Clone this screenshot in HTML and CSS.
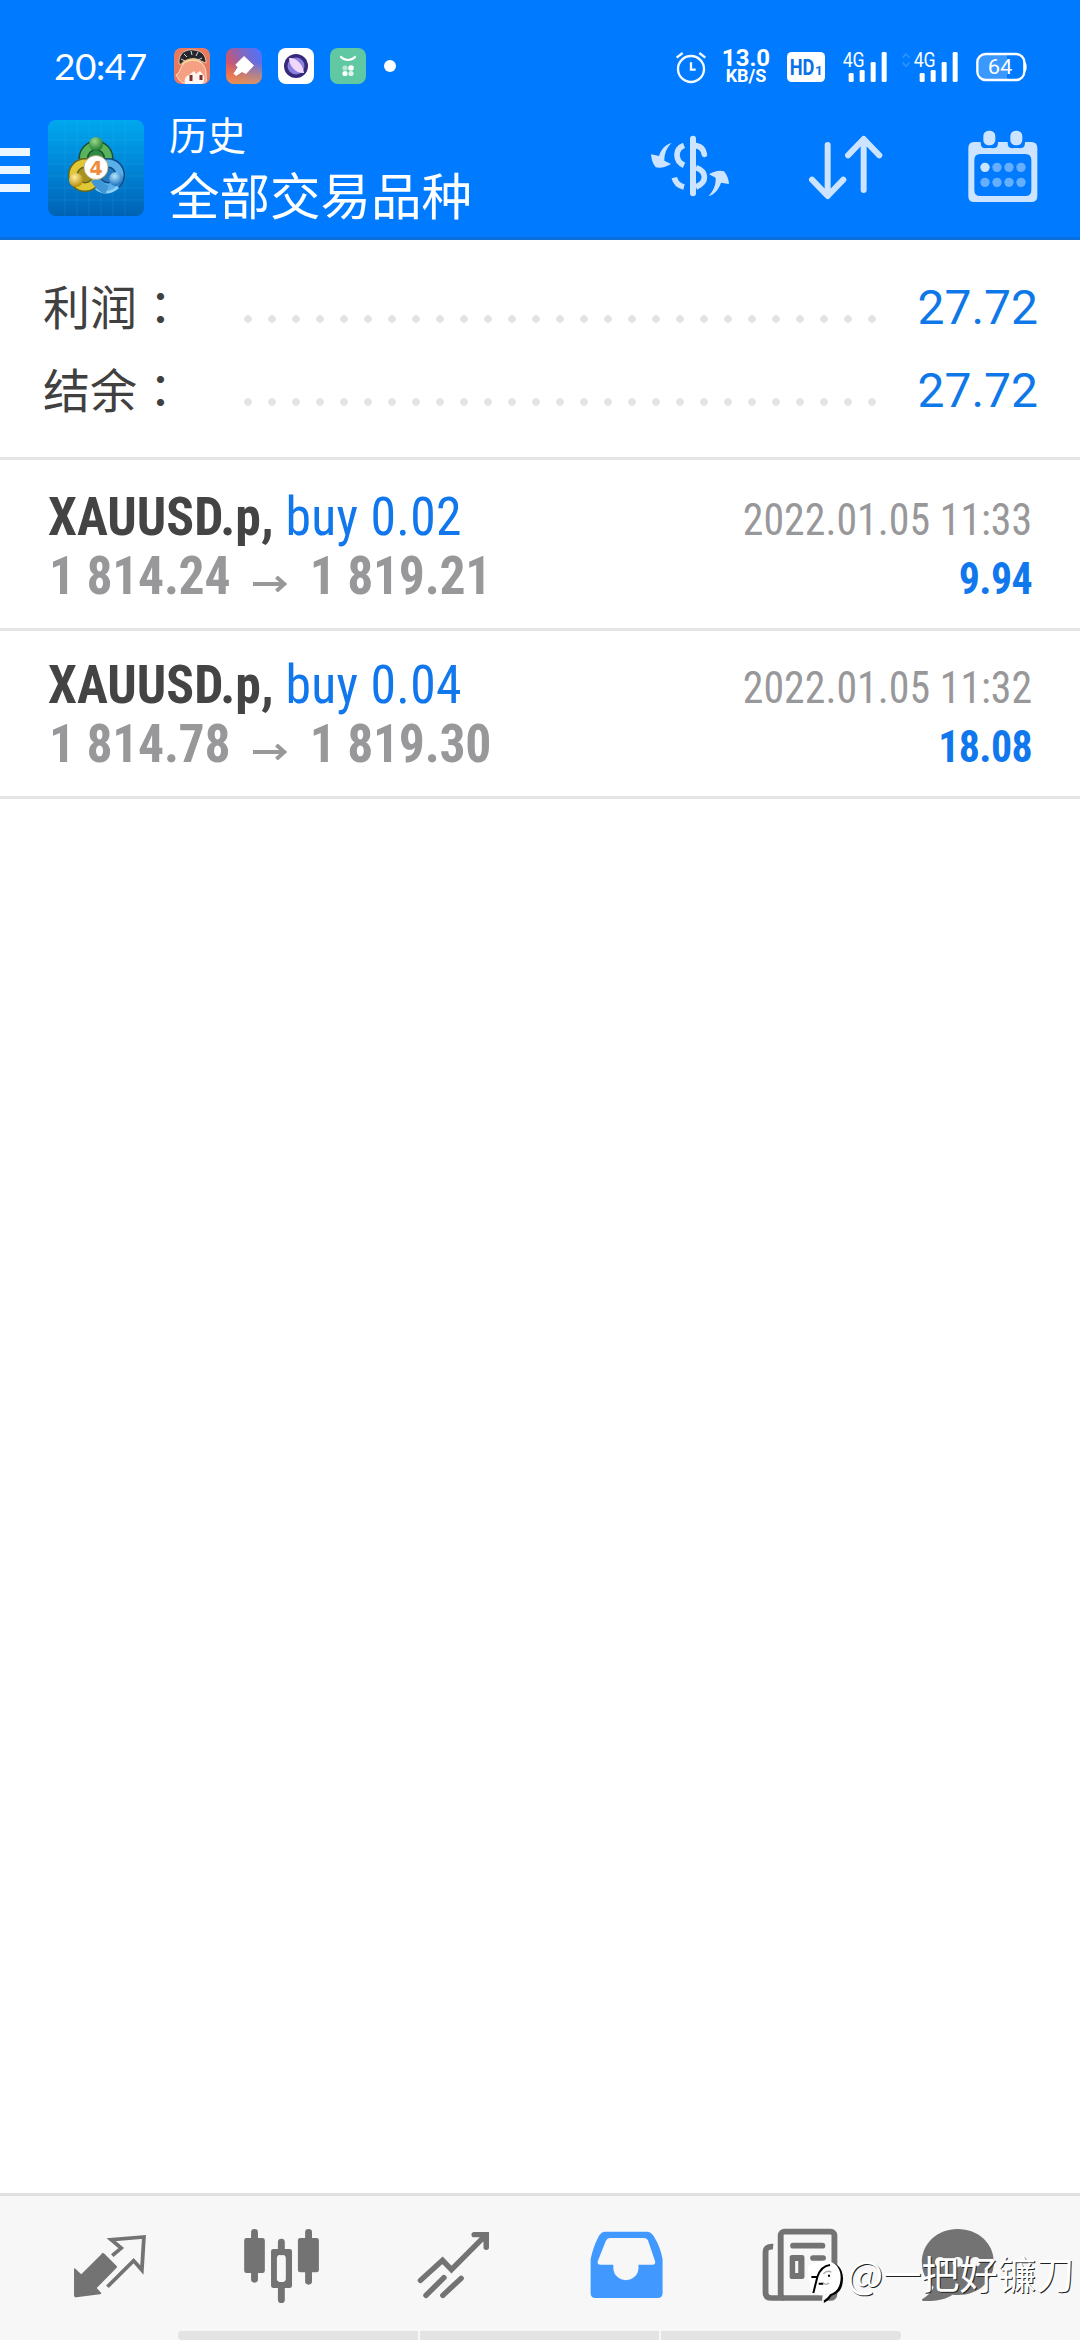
FILE: index.html
```html
<!DOCTYPE html>
<html lang="zh-CN">
<head>
<meta charset="utf-8">
<title>历史</title>
<link rel="stylesheet" href="styles.css">
</head>
<body>
<header class="top">
  <div class="status">
    <span class="clock">20:47</span>
    <div class="apps">
      <svg class="app" viewBox="0 0 36 36"><rect width="36" height="36" rx="7" fill="#e97a5e"/><path d="M5 16C4 4 13 1 20 2c8 1 12 5 12 13l-5-2c-6-4-13-3-18 3z" fill="#26262e" stroke="#f3d9c8" stroke-width=".8"/><path d="M10 6l3 3m4-6l1 4m6-3l-2 4m6 2l-4 2M7 11l4 2" stroke="#ddd" stroke-width="1"/><path d="M8 16c5-6 15-6 20 0" stroke="#ecc568" stroke-width="2" fill="none"/><path d="M2 27C8 24 5 16 14 13c12-3 18 4 18 13 0 6 2 7-2 9H9c-4-2-5-5-7-8z" fill="#f6a083" stroke="#fff0e0" stroke-width=".8"/><path d="M11 36c-1-6 1-8 4-9l5-4 2 3 4-3 4 5c1 4 0 6-2 8z" fill="#fff5ef"/><path d="M17 27v6M27 27v5" stroke="#7c3030" stroke-width="3"/></svg>
      <svg class="app" viewBox="0 0 36 36"><defs><linearGradient id="pin" x1="0" y1="0.6" x2="1" y2="0.1"><stop offset="0" stop-color="#e9504e"/><stop offset=".5" stop-color="#8466bd"/><stop offset="1" stop-color="#4b74ff"/></linearGradient><linearGradient id="pin2" x1="0" y1="0" x2="0" y2="1"><stop offset=".4" stop-color="#f2a044" stop-opacity="0"/><stop offset="1" stop-color="#e79a58" stop-opacity=".85"/></linearGradient></defs><rect width="36" height="36" rx="8" fill="url(#pin)"/><rect width="36" height="36" rx="8" fill="url(#pin2)"/><path d="M18 8.500l9.500 9-7.500 8-4-2-6 4-2-2 4-6-2-3z" fill="#fff" stroke="#fff" stroke-linejoin="round"/></svg>
      <svg class="app" viewBox="0 0 36 36"><rect width="36" height="36" rx="8" fill="#fff"/><circle cx="18" cy="18" r="12" fill="#38287c"/><circle cx="18" cy="18" r="8.500" fill="#8a80e0"/><path d="M11 10c7-1 14 6 15 15-8 1-15-7-15-15z" fill="#f1d8fa"/></svg>
      <svg class="app" viewBox="0 0 36 36"><rect width="36" height="36" rx="8" fill="#60c9a4"/><path d="M11 9c4 4 10 4 14 0" stroke="#fff" stroke-width="2.200" stroke-linecap="round" fill="none"/><g fill="#fff"><circle cx="15" cy="20" r="2.600" opacity=".55"/><circle cx="21" cy="20" r="2.800"/><circle cx="15" cy="25.500" r="2.600"/><circle cx="21" cy="25.500" r="2.600" opacity=".8"/></g></svg>
    </div>
    <span class="more-dot"></span>
    <div class="indicators">
      <svg width="36" height="40" viewBox="96 45 108 120" fill="none" stroke="#f4faff" stroke-width="7"><circle cx="150" cy="114" r="39"/><path d="M150 94v22h14M107 80l18-14M193 80l-18-14"/></svg>
      <div class="speed"><b>13.0</b><b>KB/S</b></div>
      <svg width="38" height="40" viewBox="438 45 114 120"><rect x="438" y="63" width="114" height="90" rx="14" fill="#fff"/><text class="hd" x="446" y="131" textLength="74" lengthAdjust="spacingAndGlyphs" font-size="65">HD</text><text class="hd" x="522" y="131" font-size="40">1</text></svg>
      <svg class="sig" width="46" height="40" viewBox="604 45 138 120" fill="#fff"><text class="net" x="606" y="107" textLength="66" lengthAdjust="spacingAndGlyphs">4G</text><rect x="624" y="126" width="15" height="27" rx="4"/><rect x="657" y="117" width="15" height="36" rx="4"/><rect x="690" y="93" width="15" height="60" rx="4"/><rect x="723" y="63" width="15" height="90" rx="4"/></svg>
      <svg class="sig2" width="58" height="40" viewBox="781 45 174 120" fill="#fff"><path d="M786 80l10-11 10 11M786 95l10 11 10-11" fill="none" stroke="#2f93ff" stroke-width="5"/><text class="net" x="819" y="107" textLength="66" lengthAdjust="spacingAndGlyphs">4G</text><rect x="837" y="126" width="15" height="27" rx="4"/><rect x="870" y="117" width="15" height="36" rx="4"/><rect x="903" y="93" width="15" height="60" rx="4"/><rect x="936" y="63" width="15" height="90" rx="4"/></svg>
      <svg class="bat" width="51" height="40" viewBox="1007 45 153 120"><rect x="1011" y="69" width="141" height="78" rx="25" fill="#3b98ff"/><path d="M1100 69h27q25 0 25 25v28q0 25-25 25h-27z" fill="#007aff"/><rect x="1011" y="69" width="141" height="78" rx="25" fill="none" stroke="#fff" stroke-width="7"/><path d="M1154 92q5 4 5 16t-5 16z" fill="#fff"/><text x="1042" y="130" class="pct" textLength="74" lengthAdjust="spacingAndGlyphs">64</text></svg>
    </div>
  </div>
  <div class="bar">
    <div class="menu"><i></i><i></i><i></i></div>
    <svg class="logo" viewBox="0 0 96 96">
      <defs><linearGradient id="sky" x1="0" y1="0" x2="0" y2="1"><stop offset="0" stop-color="#00a8ee"/><stop offset=".5" stop-color="#0085d6"/><stop offset="1" stop-color="#0062b4"/></linearGradient>
      <radialGradient id="gr" cx=".4" cy=".3" r=".7"><stop offset="0" stop-color="#9ad989"/><stop offset="1" stop-color="#1d7a30"/></radialGradient>
      <radialGradient id="ye" cx=".4" cy=".3" r=".7"><stop offset="0" stop-color="#fff0a0"/><stop offset="1" stop-color="#b98d0c"/></radialGradient>
      <radialGradient id="bl" cx=".4" cy=".3" r=".7"><stop offset="0" stop-color="#b6e5ff"/><stop offset="1" stop-color="#1971bd"/></radialGradient></defs>
      <rect width="96" height="96" rx="8" fill="url(#sky)"/>
      <path d="M17 0v96M29 0v96M41 0v96M53 0v96M65 0v96M77 0v96M0 20h96M0 32h96M0 44h96M0 56h96M0 68h96M0 80h96" stroke="#4cc5ff" stroke-opacity=".14"/>
      <circle cx="48" cy="38" r="12.500" fill="#2f8a43" stroke="#174f35" stroke-width="10"/><circle cx="48" cy="38" r="12.500" fill="none" stroke="#58b35b" stroke-width="7"/>
      <circle cx="60" cy="55" r="12" fill="#2478bd" stroke="#0d4784" stroke-width="10"/><circle cx="60" cy="55" r="12" fill="none" stroke="#59afe8" stroke-width="7"/>
      <circle cx="37" cy="55" r="12" fill="#a89120" stroke="#65651b" stroke-width="10"/><circle cx="37" cy="55" r="12" fill="none" stroke="#dfc735" stroke-width="7"/>
      <path d="M48 68c6 6 16 5 22-1" stroke="#8fd0f5" stroke-width="3" fill="none"/><path d="M47 59q4 8 12 11" stroke="#3f97d6" stroke-width="9" fill="none"/>
      <circle cx="48" cy="24" r="7" fill="url(#gr)"/><circle cx="28" cy="60" r="7" fill="url(#ye)"/><circle cx="68" cy="59" r="7" fill="url(#bl)"/>
      <circle cx="48" cy="47.500" r="12" fill="#fff" stroke="#b9a778" stroke-width=".8"/><text x="48" y="55" class="four">4</text>
    </svg>
    <div class="titles"><span class="sub">历史</span><span class="title">全部交易品种</span></div>
    <div class="actions">
      <svg width="80" height="76" viewBox="30 297 240 228"><g fill="none" stroke="#cce4ff" stroke-width="17"><path d="M159 326v164" stroke-linecap="round" stroke-width="18"/><path d="M168 347c14 2 23 11 25 26" stroke-linecap="round"/><path d="M132 346c-28 11-28 47 0 60M168 413c32 11 35 44 0 58M103 443c3 14 13 24 29 28"/></g><path d="M95 339c-19 4-31 19-38 39l-24-5c1 15 5 27 14 39 15 4 31-1 46-10l-20-10c0-21 7-39 22-53zM205 498c19-4 31-20 38-40l24 4c-1-16-6-27-15-38-15-4-29 0-45 9l20 10c1 20-6 40-22 55z" fill="#cce4ff"/></svg>
      <svg class="sort" width="76" height="76" viewBox="505 297 228 228" fill="none" stroke="#cce4ff" stroke-width="18" stroke-linecap="round" stroke-linejoin="round"><path d="M564 345v152M517 449l47 49 47-49M672 480V328M625 376l47-49 47 49"/></svg>
      <svg width="70" height="76" viewBox="983 297 210 228" fill="#cce4ff"><path fill-rule="evenodd" d="M1001 336h20c0 23 12 18 26 18s26 5 26-18h29c0 23 12 18 26 18s26 5 26-18h19q18 0 18 18v144q0 18-18 18H1001q-17 0-17-18V354q0-18 17-18zm19 36q-18 0-18 18v90q0 18 18 18h135q18 0 18-18v-90q0-18-18-18z"/><rect x="1029" y="302" width="36" height="44" rx="16"/><rect x="1110" y="302" width="36" height="44" rx="16"/><circle cx="1034" cy="412" r="14"/><g fill="#66afff"><circle cx="1070" cy="412" r="14"/><circle cx="1106" cy="412" r="14"/><circle cx="1142" cy="412" r="14"/><circle cx="1034" cy="457" r="14"/><circle cx="1070" cy="457" r="14"/><circle cx="1106" cy="457" r="14"/><circle cx="1142" cy="457" r="14"/></g></svg>
    </div>
  </div>
</header>
<main>
  <section class="summary">
    <div class="line"><span class="label">利润<span class="colon" lang="zh-TW">：</span></span><span class="dots"></span><span class="amount">27.72</span></div>
    <div class="line"><span class="label">结余<span class="colon" lang="zh-TW">：</span></span><span class="dots"></span><span class="amount">27.72</span></div>
  </section>
  <section class="deals">
    <article class="deal">
      <div class="left"><div class="sym"><b>XAUUSD.p,</b> <span>buy 0.02</span></div><div class="price"><b>1 814.24</b><svg class="arrow" viewBox="0 0 35 16" preserveAspectRatio="none"><path d="M0 8h32M24 1l8 7-8 7"/></svg><b>1 819.21</b></div></div>
      <div class="right"><div class="date">2022.01.05 11:33</div><div class="gain">9.94</div></div>
    </article>
    <article class="deal">
      <div class="left"><div class="sym"><b>XAUUSD.p,</b> <span>buy 0.04</span></div><div class="price"><b>1 814.78</b><svg class="arrow" viewBox="0 0 35 16" preserveAspectRatio="none"><path d="M0 8h32M24 1l8 7-8 7"/></svg><b>1 819.30</b></div></div>
      <div class="right"><div class="date">2022.01.05 11:32</div><div class="gain">18.08</div></div>
    </article>
  </section>
</main>
<nav class="tabs">
  <svg preserveAspectRatio="none" viewBox="69.7 48 499.500 432"><path d="M296 220q4-2 8 2l34 35q4 3 0 7l-57 60 13 15q1 3-4 4l-68 9q-7 1-7-6v-78q0-5 4-2l17 17 57-59z" fill="#737373"/><path d="M326 227l26-23-29-25 95-8-6 99-24-28-76 78" fill="none" stroke="#737373" stroke-width="11"/></svg>
  <svg preserveAspectRatio="none" viewBox="569.1 48 499.500 432" fill="#737373"><g stroke="#737373" stroke-width="20" stroke-linecap="round"><path d="M739 157v141M896 157v147M817 186v30M817 320v39"/></g><rect x="709" y="174" width="60" height="105" rx="7"/><rect x="865" y="174" width="61" height="103" rx="7"/><path fill-rule="evenodd" d="M794 207h47q7 0 7 7v103q0 7-7 7h-47q-7 0-7-7V214q0-7 7-7zm23 17q-13 0-13 10v62q0 10 13 10t13-10v-62q0-10-13-10z"/></svg>
  <svg preserveAspectRatio="none" viewBox="1068.6 48 499.500 432" fill="none" stroke="#737373" stroke-width="16" stroke-linecap="round"><path d="M1221 301l64-60 26 28 96-100M1377 164h35v38M1237 346l52-53M1286 346l53-51"/></svg>
  <svg preserveAspectRatio="none" viewBox="0 48 499.500 432" fill="#4199ff"><path fill-rule="evenodd" d="M190 155h120q12 0 20 13 20 33 26 70v102q0 14-14 14H161q-14 0-14-14V238q7-37 24-70 7-13 19-13zm13 19q-8 0-12 9l-23 60q-3 11 8 11h37v10a36 36 0 0 0 73 0v-10h41q10 0 7-11l-19-58q-3-11-14-11z"/></svg>
  <svg preserveAspectRatio="none" viewBox="499.500 48 499.500 432" fill="none" stroke="#737373" stroke-width="17"><rect x="699" y="155" width="156" height="199" rx="11"/><path d="M677 200q-22-2-22 16v122q0 16 18 16h35"/><path d="M735 197h85M793 234h29" stroke-linecap="round"/><path fill="#737373" stroke="none" fill-rule="evenodd" d="M733 225h28q7 0 7 7v59q0 6-7 6h-28q-8 0-8-6v-59q0-7 8-7zm8 18v36h9v-36z"/></svg>
  <svg preserveAspectRatio="none" viewBox="999 48 499.500 432" fill="#737373"><path d="M1213 147c60 0 105 43 105 100 0 62-53 105-120 97-18 14-50 20-82 19-7 0-9-5-4-7 14-9 28-23 31-35-21-17-34-43-34-74 0-57 45-100 104-100z"/><g fill="#f6f6f6"><circle cx="1162" cy="246" r="15"/><circle cx="1213" cy="246" r="15"/><circle cx="1264" cy="246" r="15"/></g></svg>
  <div class="handle"><i></i><i></i><i></i></div>
  <div class="mark"><svg width="36" height="46" viewBox="0 0 108 138"><path d="M47 14c30-12 58 8 58 44 0 30-12 46-34 52-8 12-16 18-24 22l4-20z" fill="#000"/><path d="M0 22c10-10 20-8 30-12 34-14 68 6 68 44 0 28-12 46-32 52-8 12-16 18-24 20l2-18c-10 2-16 0-20-6l-8 2C6 84 0 60 0 22z" fill="#fff"/><path d="M10 54h18l-12 48M28 54C36 30 48 20 66 18M32 74h14M60 50h6" stroke="#000" stroke-width="6" fill="none"/><path d="M46 44q14-12 24-4M44 70q8 10 20 2" stroke="#aaa" stroke-width="4" fill="none"/></svg><span>@一把好镰刀</span></div>
</nav>
</body>
</html>
```
FILE: styles.css
```css
* { box-sizing: border-box; }
body {
  margin: 0;
  width: 1080px;
  height: 2340px;
  display: flex;
  flex-direction: column;
  background: #fff;
  font-family: Roboto, "Noto Sans CJK SC", sans-serif;
  overflow: hidden;
}
svg { display: block; flex: none; }
.top {
  height: 240px;
  background: #007aff;
  border-bottom: 3px solid #0a6fdc;
  color: #fff;
}
.status {
  height: 104px;
  padding: 28px 53px 0 54px;
  display: flex;
  align-items: center;
}
.clock { width: 120px; font: 37px/40px Lato, sans-serif; letter-spacing: -0.5px; white-space: nowrap; }
.apps { display: flex; gap: 16px; }
.app { width: 36px; height: 36px; }
.more-dot { width: 12px; height: 12px; margin-left: 18px; border-radius: 50%; background: #fff; }
.indicators { margin-left: auto; display: flex; align-items: center; }
.speed { width: 50px; margin: 0 16px 0 12px; display: flex; flex-direction: column; align-items: center; }
.speed b { font-size: 24px; line-height: 20px; }
.speed b + b { font-size: 18px; line-height: 16px; }
.hd { font-family: Roboto, sans-serif; font-weight: 700; fill: #0870e8; }
.net { font-family: Roboto, sans-serif; font-size: 60px; }
.sig { margin-left: 17px; }
.sig2 { margin-left: 13px; }
.bat { margin-left: 17px; }
.pct { font: 400 61px Roboto, sans-serif; fill: #fff; }
.bar { height: 133px; display: flex; align-items: flex-start; }
.menu { width: 48px; padding-top: 44px; display: flex; flex-direction: column; gap: 10px; }
.menu i { width: 30px; height: 8px; background: #ecf6ff; }
.logo { width: 96px; height: 96px; margin-top: 16px; }
.four { font: 700 19px "DejaVu Sans", sans-serif; fill: #f08a3c; text-anchor: middle; }
.titles { margin: 4px 0 0 25px; display: flex; flex-direction: column; font-family: "Noto Sans CJK SC", sans-serif; }
.sub { font-size: 38.5px; line-height: 50px; }
.title { font-size: 50.5px; line-height: 70px; }
.actions { flex: 1; margin: 25px 42px 0 0; display: flex; justify-content: flex-end; }
.sort { margin: 0 84px 0 78px; }
.summary { height: 220px; padding: 25px 42px 0; border-bottom: 3px solid #e4e4e4; }
.line { height: 83px; display: flex; align-items: center; }
.label { width: 194px; margin-top: -5px; padding-left: 1px; font: 47px/83px "Noto Sans CJK SC", sans-serif; color: #404040; white-space: nowrap; }
.colon { font-family: "Noto Sans CJK TC", sans-serif; }
.dots {
  width: 648px;
  height: 24px;
  margin-top: 25px;
  background: radial-gradient(circle, #e3e3e3 3.4px, transparent 4.2px) 0 0 / 24px 24px;
}
.amount { margin: 2px 0 0 auto; font-size: 48px; color: #0f78e8; }
.deal {
  height: 168px;
  padding: 24px 48px 0;
  display: flex;
  justify-content: space-between;
  border-bottom: 3px solid #e4e4e4;
  font-stretch: 75%;
  font-family: "Roboto Condensed", Roboto, sans-serif;
  white-space: nowrap;
}
.deal:first-child { height: 171px; padding-top: 27px; }
.left { transform: scaleX(0.957); transform-origin: 0 0; font-size: 54px; line-height: 59px; }
.sym { color: #444; }
.sym span { letter-spacing: 0.3px; color: #1177ec; }
.price { display: flex; padding-left: 1px; letter-spacing: -0.3px; color: #98989b; }
.arrow { width: 36px; height: 16px; margin: 30px 23px 0 24px; fill: none; stroke: #98989b; stroke-width: 4; }
.right { padding-top: 3px; text-align: right; font-size: 45px; line-height: 59px; transform: scaleX(0.93); transform-origin: 100% 0; }
.date { color: #98989b; }
.gain { color: #1177ec; font-weight: 700; letter-spacing: -0.6px; }
.tabs {
  position: relative;
  margin-top: auto;
  height: 147px;
  padding: 0 24px;
  border-top: 3px solid #e0e0e0;
  background: #f7f7f7;
  display: flex;
}
.tabs > svg { width: 172px; height: 144px; }
.handle { position: absolute; left: 178px; bottom: 0; width: 723px; height: 9px; display: flex; gap: 2px; border-radius: 4px; overflow: hidden; }
.handle i { flex: 1; background: #e3e3e3; }
.mark { position: absolute; left: 808px; top: 63px; display: flex; color: #fff; }
.mark span { margin: -11px 0 0 3px; font: 400 38.2px/50px "Noto Sans CJK SC", sans-serif; white-space: nowrap; text-shadow: 1px 1px 0 #222; }
```
